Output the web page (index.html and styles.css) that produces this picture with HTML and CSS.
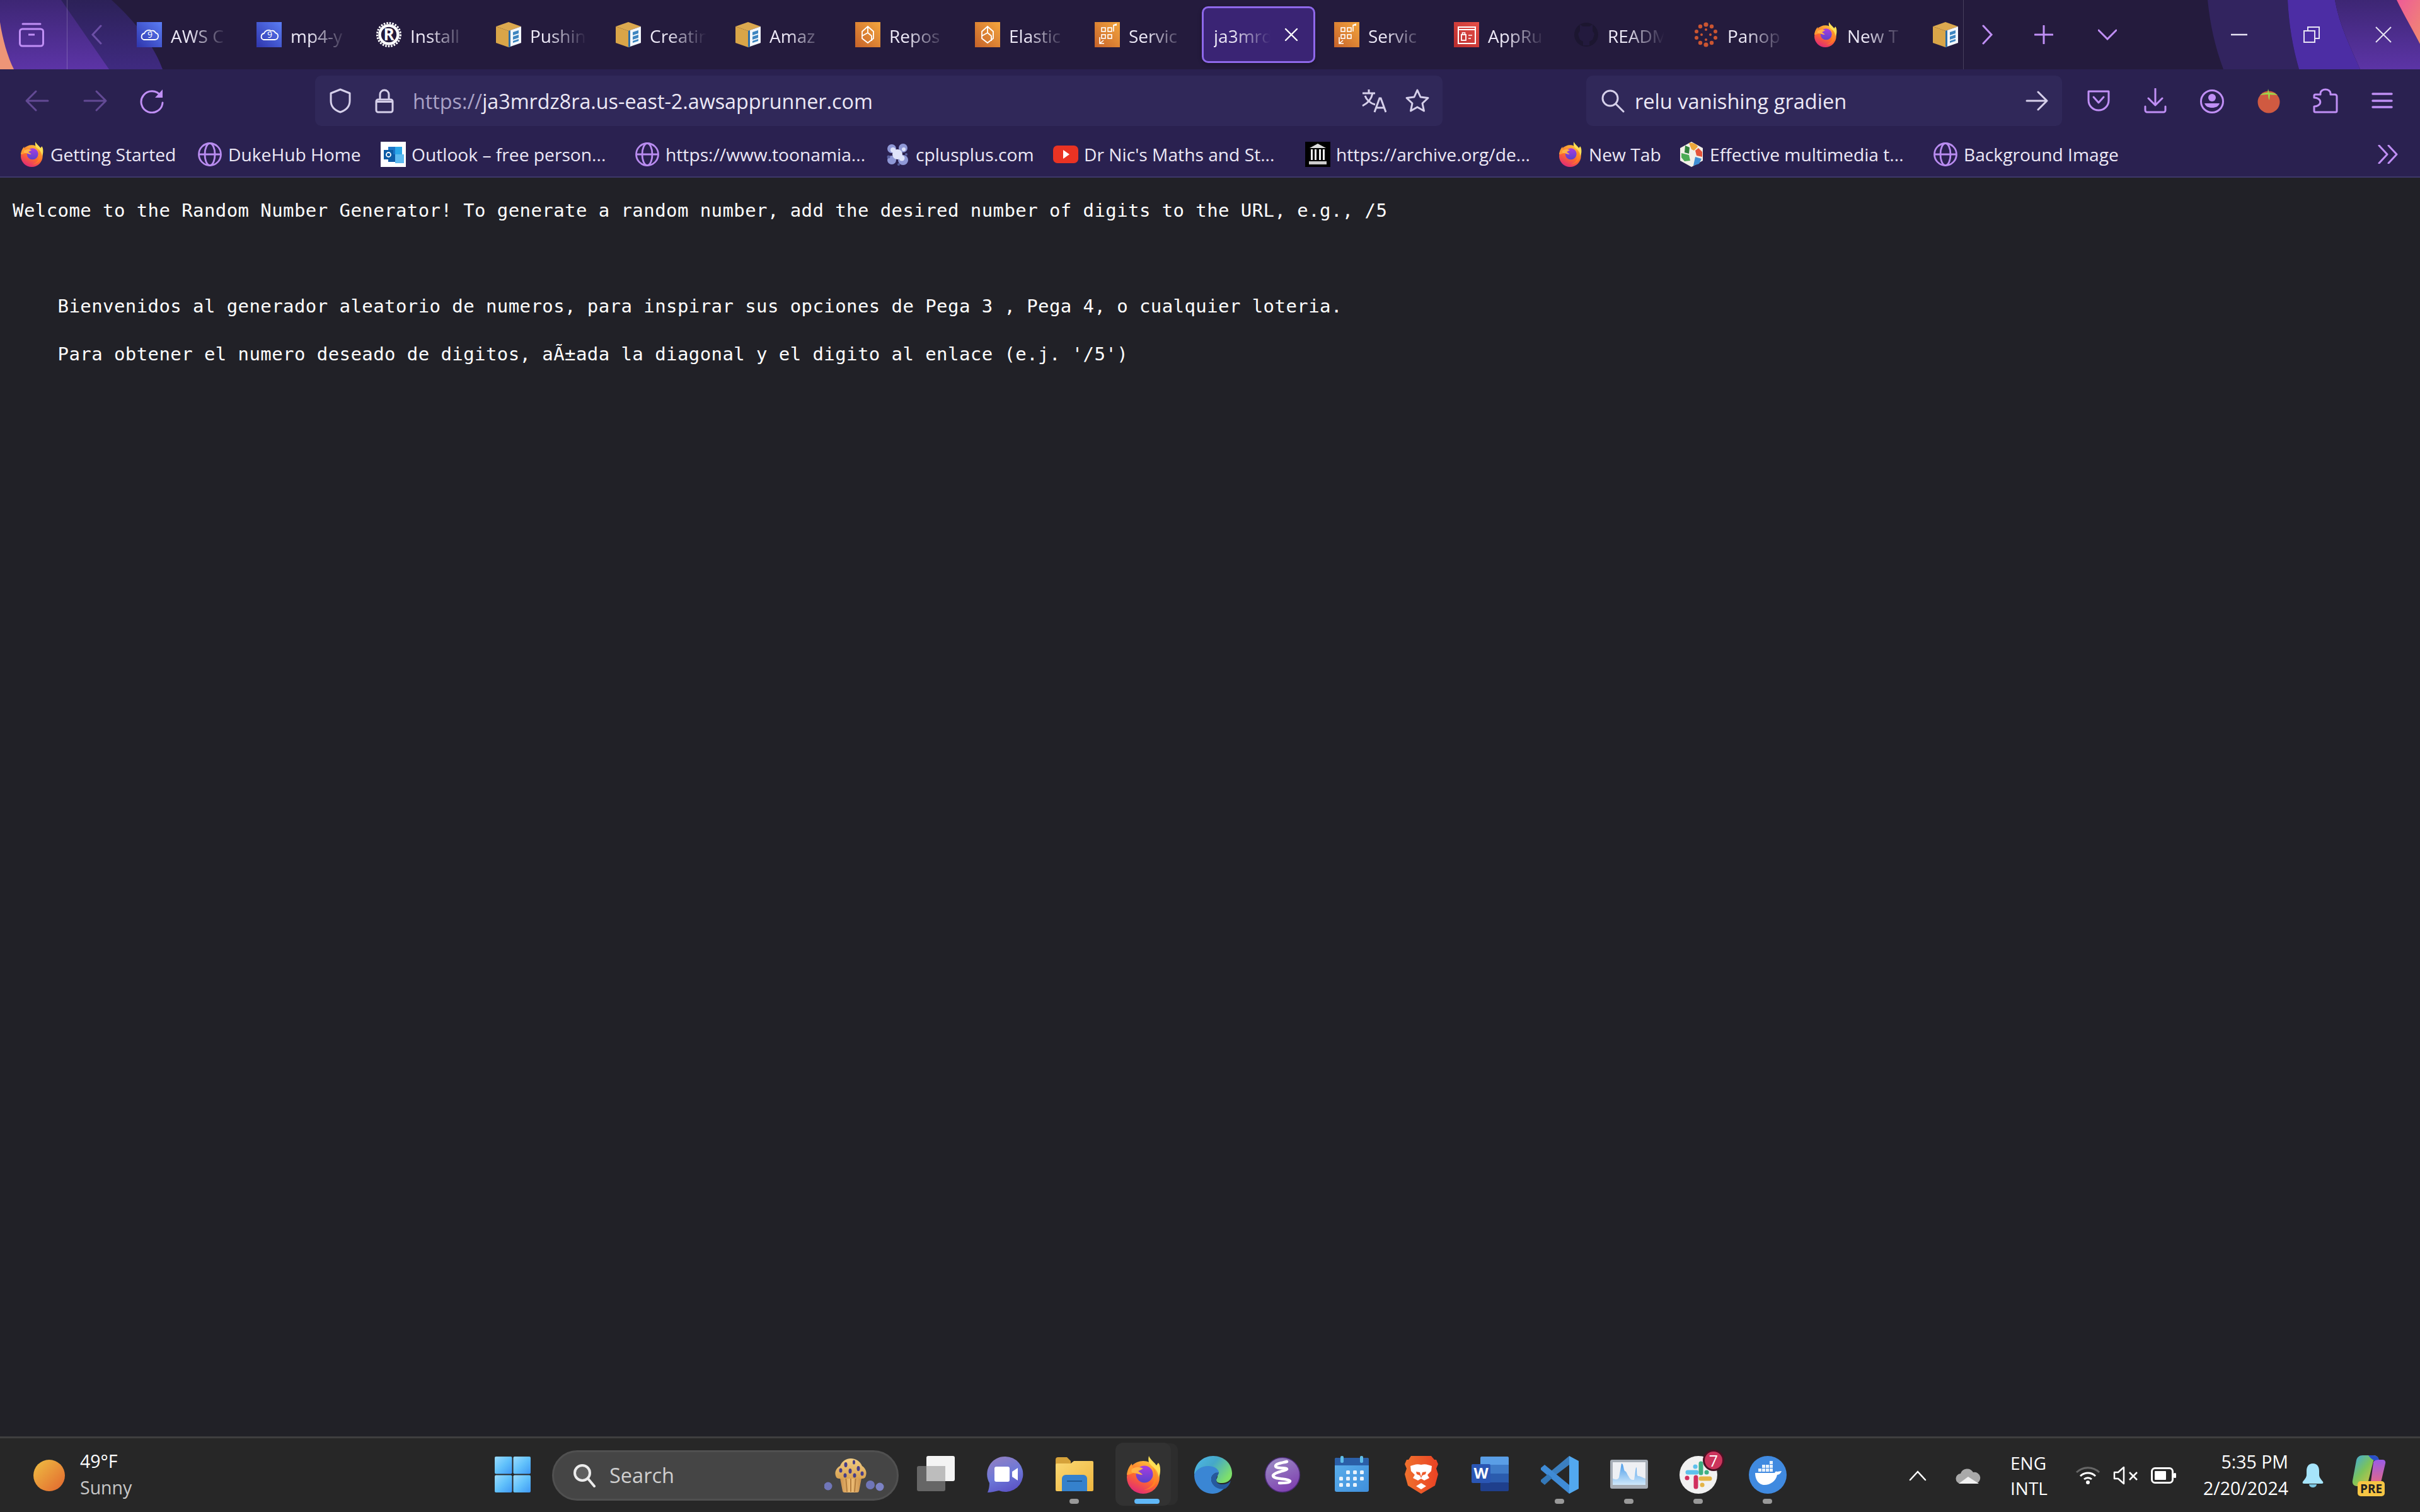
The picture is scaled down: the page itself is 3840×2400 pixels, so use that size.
FILE: index.html
```html
<!DOCTYPE html>
<html lang="en">
<head>
<meta charset="utf-8">
<title>ja3mrdz8ra.us-east-2.awsapprunner.com</title>
<link rel="stylesheet" href="styles.css">
</head>
<body>
<svg class="defs" aria-hidden="true">
  <defs>
    <linearGradient id="gBlue" x1="1" y1="0" x2="0" y2="1"><stop offset="0" stop-color="#5a7df5"/><stop offset="1" stop-color="#2f35ac"/></linearGradient>
    <linearGradient id="gOrange" x1="1" y1="0" x2="0" y2="1"><stop offset="0" stop-color="#f4a63e"/><stop offset="1" stop-color="#c6622a"/></linearGradient>
    <linearGradient id="gRed" x1="1" y1="0" x2="0" y2="1"><stop offset="0" stop-color="#e75048"/><stop offset="1" stop-color="#b92d2e"/></linearGradient>
    <linearGradient id="gFox" x1="0.8" y1="0" x2="0.3" y2="1"><stop offset="0" stop-color="#ffc93c"/><stop offset=".55" stop-color="#ff6a2c"/><stop offset="1" stop-color="#e0287a"/></linearGradient>
    <linearGradient id="gFoxIn" x1="0.5" y1="0" x2="0.5" y2="1"><stop offset="0" stop-color="#a93ce0"/><stop offset="1" stop-color="#5a43cc"/></linearGradient>
    <linearGradient id="gEdge" x1="0" y1="0" x2="1" y2="0.6"><stop offset="0" stop-color="#4fb8ea"/><stop offset=".5" stop-color="#45a8c8"/><stop offset="1" stop-color="#7ee06a"/></linearGradient>
    <linearGradient id="gChat" x1="0.3" y1="0" x2="0.7" y2="1"><stop offset="0" stop-color="#8f7fc4"/><stop offset=".5" stop-color="#6d78d8"/><stop offset="1" stop-color="#5a50c4"/></linearGradient>
    <linearGradient id="gFolder" x1="0" y1="0" x2="1" y2="1"><stop offset="0" stop-color="#fbd873"/><stop offset="1" stop-color="#eeb63f"/></linearGradient>
    <linearGradient id="gEmacs" x1="0.2" y1="0" x2="0.7" y2="1"><stop offset="0" stop-color="#9a8cc4"/><stop offset="1" stop-color="#7f3fb0"/></linearGradient>
    <linearGradient id="gBrave" x1="0" y1="0.5" x2="1" y2="0.5"><stop offset="0" stop-color="#f0722e"/><stop offset="1" stop-color="#ea4224"/></linearGradient>
    <linearGradient id="gCal" x1="0" y1="0" x2="1" y2="1"><stop offset="0" stop-color="#5cb0ec"/><stop offset="1" stop-color="#3f8fdc"/></linearGradient>
    <linearGradient id="gWin" x1="0" y1="0" x2="1" y2="1"><stop offset="0" stop-color="#9bdcff"/><stop offset=".5" stop-color="#62c2fb"/><stop offset="1" stop-color="#3f98f4"/></linearGradient>
    <linearGradient id="gMon" x1="0" y1="0" x2="0" y2="1"><stop offset="0" stop-color="#4a9be8"/><stop offset="1" stop-color="#cfe8fb"/></linearGradient>
    <linearGradient id="gSun" x1="0" y1="0" x2="1" y2="1"><stop offset="0" stop-color="#efc043"/><stop offset="1" stop-color="#e2652e"/></linearGradient>
    <linearGradient id="gCop" x1="0" y1="0" x2="1" y2="1"><stop offset="0" stop-color="#3aa7e8"/><stop offset=".45" stop-color="#7cc35a"/><stop offset="1" stop-color="#f5c43c"/></linearGradient>
    <linearGradient id="gCop2" x1="0" y1="0" x2="0" y2="1"><stop offset="0" stop-color="#9a5ce8"/><stop offset="1" stop-color="#ee6a7a"/></linearGradient>
    <linearGradient id="gMuf" x1="0" y1="0" x2="0" y2="1"><stop offset="0" stop-color="#f2cd83"/><stop offset="1" stop-color="#d9a352"/></linearGradient>
    <linearGradient id="gPaper" x1="0" y1="0" x2="1" y2="0"><stop offset="0" stop-color="#c98f4a"/><stop offset=".5" stop-color="#f0c078"/><stop offset="1" stop-color="#c98f4a"/></linearGradient>

    <symbol id="i-c9" viewBox="0 0 40 40">
      <rect width="40" height="40" fill="url(#gBlue)"/>
      <path d="M11 28h18a5.500 5.500 0 0 0 1-10.800 6 6 0 0 0-7-3.200 7.500 7.500 0 0 0-11 4 5.200 5.200 0 0 0-1 10z" fill="none" stroke="#fff" stroke-width="1.800"/>
      <text x="21" y="25" class="svg-nine">9</text>
    </symbol>
    <symbol id="i-rust" viewBox="0 0 40 40">
      <circle cx="20" cy="20" r="18.500" fill="none" stroke="#fff" stroke-width="3" stroke-dasharray="2.600 2"/>
      <circle cx="20" cy="20" r="14.500" fill="none" stroke="#fff" stroke-width="4.500"/>
      <text x="20" y="29" class="svg-r">R</text>
    </symbol>
    <symbol id="i-box" viewBox="0 0 40 40">
      <polygon points="20,0 40,7 20,14 0,7" fill="#dca94f"/>
      <polygon points="0,7 20,14 20,40 0,33" fill="#d9a548"/>
      <polygon points="20,14 40,7 40,33 20,40" fill="#f3f7fb"/>
      <polygon points="20,14 23,13 23,39 20,40" fill="#2c6fa8"/>
      <path d="M27 16l9-3v5l-9 3zM27 23l9-3v5l-9 3zM27 30l9-3v3l-9 3z" fill="#3e86c0"/>
    </symbol>
    <symbol id="i-repo" viewBox="0 0 40 40">
      <rect width="40" height="40" fill="url(#gOrange)"/>
      <path d="M20 7l9 8v11l-9 7-9-7V15z M20 7v10l-9 5 M20 17l6 5v8" fill="none" stroke="#fff" stroke-width="1.800"/>
    </symbol>
    <symbol id="i-svc" viewBox="0 0 40 40">
      <rect width="40" height="40" fill="url(#gOrange)"/>
      <g fill="none" stroke="#fff" stroke-width="1.600">
        <rect x="11" y="9" width="6" height="6"/><rect x="21" y="9" width="6" height="6"/>
        <rect x="11" y="20" width="6" height="6"/><rect x="21" y="20" width="6" height="6"/>
        <path d="M30 15V5h5M30 5l5-2M8 24v10h7M8 34l6-5"/>
      </g>
    </symbol>
    <symbol id="i-apprun" viewBox="0 0 40 40">
      <rect width="40" height="40" fill="url(#gRed)"/>
      <rect x="7" y="8" width="27" height="26" fill="none" stroke="#fff" stroke-width="2"/>
      <path d="M7 12h27" stroke="#fff" stroke-width="2"/>
      <rect x="12" y="20" width="7" height="9" fill="none" stroke="#fff" stroke-width="1.800"/>
      <path d="M13.500 20v-3h4v3M23 21h6M23 26h4" fill="none" stroke="#fff" stroke-width="1.600"/>
    </symbol>
    <symbol id="i-gh" viewBox="0 0 40 40">
      <ellipse cx="20" cy="20" rx="19" ry="19" fill="#1c1630"/>
      <path d="M10 4l5 3h10l5-3v10l3 5-3 9-5 3v6H15v-6l-5-3-3-9 3-5z" fill="#231a3e"/>
    </symbol>
    <symbol id="i-pan" viewBox="0 0 40 40">
      <g fill="#cb5531">
        <circle cx="20" cy="4" r="3.600"/><circle cx="29" cy="7" r="3.200"/><circle cx="35" cy="15" r="3"/><circle cx="35" cy="25" r="3"/><circle cx="29" cy="33" r="3.200"/><circle cx="20" cy="36" r="3.600"/><circle cx="11" cy="33" r="3.200"/><circle cx="5" cy="25" r="3"/><circle cx="5" cy="15" r="3"/><circle cx="11" cy="7" r="3.200"/>
        <circle cx="20" cy="12" r="2"/><circle cx="27" cy="20" r="2"/><circle cx="20" cy="28" r="2"/><circle cx="13" cy="20" r="2"/>
      </g>
    </symbol>
    <symbol id="i-fox" viewBox="0 0 60 60">
      <circle cx="29" cy="34" r="26" fill="url(#gFox)"/>
      <path d="M38 0c-2 8 0 12 6 17 5 4 8 7 10 17 3-7 3-19-1-23-2 2-2 3-3 4C47 10 41 7 38 0z" fill="#ffdf55"/>
      <path d="M3 30c1-10 6-16 8-18 0 6 3 9 8 9-2 3-5 6-8 7-3 1-5 2-8 2z" fill="#ff9a32"/>
      <circle cx="31" cy="29" r="13.500" fill="url(#gFoxIn)"/>
      <path d="M11 21c6-4 11-4 18-1-3 1-4 3-8 4 2 2 5 3 7 6-6 0-9-3-15-3-3 0-3-4-2-6z" fill="#ffb347"/>
      <path d="M44 18c6 6 9 16 4 26-3 6-10 10-18 10 11-3 17-10 17-20 0-6-1-11-3-16z" fill="#ff8a1f" opacity=".7"/>
    </symbol>
    <symbol id="i-globe" viewBox="0 0 40 40">
      <g fill="none" stroke="#b98cf0" stroke-width="2.800">
        <circle cx="20" cy="20" r="17.500"/><ellipse cx="20" cy="20" rx="8" ry="17.500"/><path d="M3 20h34"/>
      </g>
    </symbol>
    <symbol id="i-outlook" viewBox="0 0 40 40">
      <rect width="40" height="40" fill="#fff"/>
      <rect x="12" y="8" width="22" height="24" fill="#1b75c8"/>
      <rect x="23" y="8" width="11" height="12" fill="#2aa6e8"/>
      <rect x="12" y="20" width="11" height="12" fill="#0f5ca8"/>
      <rect x="23" y="20" width="14" height="14" fill="#5ebbf0"/>
      <rect x="5" y="13" width="15" height="15" fill="#0d5ca5"/>
      <circle cx="12.500" cy="20.500" r="3.500" fill="none" stroke="#fff" stroke-width="1.800"/>
    </symbol>
    <symbol id="i-cpp" viewBox="0 0 40 40">
      <g fill="#8f98d6"><circle cx="11" cy="11" r="7"/><circle cx="29" cy="10" r="7"/><circle cx="11" cy="29" r="7"/><circle cx="29" cy="29" r="8"/></g>
      <g fill="#dfe3fa"><circle cx="20" cy="20" r="8"/><circle cx="13" cy="13" r="4"/><circle cx="27" cy="26" r="4.500"/><circle cx="30" cy="12" r="3"/></g>
      <g fill="#59609e"><circle cx="6" cy="24" r="2.500"/><circle cx="22" cy="36" r="2"/><circle cx="34" cy="20" r="2"/></g>
    </symbol>
    <symbol id="i-yt" viewBox="0 0 40 40">
      <rect y="6" width="40" height="28" rx="7" fill="#ea3323"/>
      <polygon points="16,13 26,20 16,27" fill="#fff"/>
    </symbol>
    <symbol id="i-arch" viewBox="0 0 40 40">
      <rect width="40" height="40" fill="#000"/>
      <polygon points="20,3 33,10 7,10" fill="#ddd"/>
      <rect x="6" y="31" width="28" height="5" fill="#ccc"/>
      <g fill="#eee"><rect x="9" y="12" width="3" height="17"/><rect x="15" y="12" width="3" height="17"/><rect x="22" y="12" width="3" height="17"/><rect x="28" y="12" width="3" height="17"/></g>
    </symbol>
    <symbol id="i-eff" viewBox="0 0 40 40">
      <polygon points="20,0 38,10 38,30 20,40 2,30 2,10" fill="#f2f0e8"/>
      <path d="M16 2c6-1 12 1 14 6l-6 6-4-2z" fill="#eea83a"/>
      <path d="M31 10l6 6v8l-9-2-2-8z" fill="#e4543a"/>
      <path d="M26 24l10 3-4 8-9 3z" fill="#3f8ed4"/>
      <path d="M18 26l5 2-2 10-8-3z" fill="#f2f0e8"/>
      <path d="M4 18l12 3 2 9-9 1-5-6z" fill="#4bab54"/>
      <path d="M10 6l7 3-1 10-7-2z" fill="#2f7f3a"/>
    </symbol>
  </defs>
</svg>

<div class="page">
  <header class="chrome">
    <div class="tabstrip">
      <svg class="theme" viewBox="0 0 3840 110" preserveAspectRatio="none" aria-hidden="true">
        <defs>
          <linearGradient id="tA" x1="0" y1="0" x2="0" y2="1"><stop offset="0" stop-color="#3d2674"/><stop offset="1" stop-color="#5c34a6"/></linearGradient>
          <linearGradient id="tB" x1="0" y1="0" x2="0" y2="1"><stop offset="0" stop-color="#2c2158"/><stop offset="1" stop-color="#3f2a80"/></linearGradient>
          <linearGradient id="tP" x1="0" y1="0" x2="1" y2="1"><stop offset="0" stop-color="#ee5a98"/><stop offset="1" stop-color="#f08a70"/></linearGradient>
        </defs>
        <path d="M0 0H177C215 35 243 70 258 110H0z" fill="url(#tB)"/>
        <path d="M0 0H97L173 110H0z" fill="url(#tA)"/>
        <path d="M0 35C4 62 12 90 22 110H0z" fill="#ee9577"/>
        <path d="M3503 0H3630C3632 40 3638 75 3648 110H3528C3515 75 3507 40 3503 0z" fill="#32245f"/>
        <path d="M3630 0H3705C3712 40 3730 75 3745 110H3648C3638 75 3632 40 3630 0z" fill="#4c2da4"/>
        <path d="M3705 0H3803C3815 25 3830 50 3840 70V110H3745C3730 75 3712 40 3705 0z" fill="url(#tA)"/>
        <path d="M3803 0H3840V70C3830 50 3815 25 3803 0z" fill="url(#tP)"/>
      </svg>
      <div class="pinned">
        <svg class="ico-40" viewBox="0 0 40 40"><g fill="none" stroke="#c08ff5" stroke-width="3" stroke-linecap="round" stroke-linejoin="round"><path d="M6 3h28"/><rect x="1.500" y="11" width="37" height="27" rx="4"/></g><path d="M15 20h10" stroke="#c08ff5" stroke-width="3"/></svg>
      </div>
      <div class="scroll-prev">
        <svg class="ico-chev" viewBox="0 0 18 32"><path d="M16 2L3 16l13 14" fill="none" stroke="#6c4fa6" stroke-width="3" stroke-linecap="round"/></svg>
      </div>
      <div class="tabs">
        <div class="tab"><svg class="fav"><use href="#i-c9"/></svg><span class="tab-label">AWS C</span></div>
        <div class="tab"><svg class="fav"><use href="#i-c9"/></svg><span class="tab-label">mp4-y</span></div>
        <div class="tab"><svg class="fav"><use href="#i-rust"/></svg><span class="tab-label">Install</span></div>
        <div class="tab"><svg class="fav"><use href="#i-box"/></svg><span class="tab-label">Pushin</span></div>
        <div class="tab"><svg class="fav"><use href="#i-box"/></svg><span class="tab-label">Creatin</span></div>
        <div class="tab"><svg class="fav"><use href="#i-box"/></svg><span class="tab-label">Amaz</span></div>
        <div class="tab"><svg class="fav"><use href="#i-repo"/></svg><span class="tab-label">Repos</span></div>
        <div class="tab"><svg class="fav"><use href="#i-repo"/></svg><span class="tab-label">Elastic</span></div>
        <div class="tab"><svg class="fav"><use href="#i-svc"/></svg><span class="tab-label">Servic</span></div>
        <div class="tab tab-active"><span class="tab-label tab-label-active">ja3mrdz</span><svg class="tab-close" viewBox="0 0 22 22"><path d="M2 2l18 18M20 2L2 20" stroke="#fff" stroke-width="2.400" stroke-linecap="round"/></svg></div>
        <div class="tab"><svg class="fav"><use href="#i-svc"/></svg><span class="tab-label">Servic</span></div>
        <div class="tab"><svg class="fav"><use href="#i-apprun"/></svg><span class="tab-label">AppRu</span></div>
        <div class="tab"><svg class="fav"><use href="#i-gh"/></svg><span class="tab-label">READM</span></div>
        <div class="tab"><svg class="fav"><use href="#i-pan"/></svg><span class="tab-label">Panop</span></div>
        <div class="tab"><svg class="fav"><use href="#i-fox"/></svg><span class="tab-label">New T</span></div>
        <div class="tab"><svg class="fav"><use href="#i-box"/></svg></div>
      </div>
      <div class="scroll-next">
        <svg class="ico-chev" viewBox="0 0 18 32"><path d="M2 2l13 14L2 30" fill="none" stroke="#c08ff5" stroke-width="3" stroke-linecap="round"/></svg>
      </div>
      <svg class="ico-plus" viewBox="0 0 30 30"><path d="M15 1v28M1 15h28" stroke="#c08ff5" stroke-width="3" stroke-linecap="round"/></svg>
      <svg class="ico-down" viewBox="0 0 30 18"><path d="M1 2l14 14L29 2" fill="none" stroke="#c08ff5" stroke-width="3" stroke-linecap="round"/></svg>
      <div class="winctl">
        <svg class="win-min" viewBox="0 0 26 4"><path d="M0 2h26" stroke="#e8e4f4" stroke-width="2.500"/></svg>
        <svg class="win-res" viewBox="0 0 26 26"><path d="M7 6V1h18v18h-6" fill="none" stroke="#e8e4f4" stroke-width="2"/><rect x="1" y="7" width="17" height="18" fill="none" stroke="#e8e4f4" stroke-width="2"/></svg>
        <svg class="win-cls" viewBox="0 0 26 26"><path d="M1 1l24 24M25 1L1 25" stroke="#e8e4f4" stroke-width="2"/></svg>
      </div>
    </div>

    <div class="navbar">
      <svg class="nav-btn" viewBox="0 0 90 40"><path d="M61 20H29M42 5L27 20l15 15" fill="none" stroke="#634a95" stroke-width="3" stroke-linecap="round" stroke-linejoin="round"/></svg>
      <svg class="nav-btn" viewBox="0 0 90 40"><path d="M29 20h32M48 5l15 15-15 15" fill="none" stroke="#634a95" stroke-width="3" stroke-linecap="round" stroke-linejoin="round"/></svg>
      <svg class="nav-btn" viewBox="0 0 90 40"><path d="M60 12a17 17 0 1 0 3 11" fill="none" stroke="#c08ff5" stroke-width="3" stroke-linecap="round"/><path d="M63 2v13H51z" fill="#c08ff5"/></svg>
      <div class="urlbar">
        <svg class="ico-shield" viewBox="0 0 36 40"><path d="M18 2l15 6v12c0 9-6 15-15 18C9 35 3 29 3 20V8z" fill="none" stroke="#d6d0ea" stroke-width="3" stroke-linejoin="round"/></svg>
        <svg class="ico-lock" viewBox="0 0 30 40"><path d="M8 18V10a7 7 0 0 1 14 0v8" fill="none" stroke="#d6d0ea" stroke-width="3"/><rect x="2" y="18" width="26" height="20" rx="3" fill="none" stroke="#d6d0ea" stroke-width="3"/><path d="M3 20h24v3H3z" fill="#d6d0ea"/></svg>
        <div class="url-text"><span class="url-dim">https://</span>ja3mrdz8ra.us-east-2.awsapprunner.com</div>
        <svg class="ico-tr" viewBox="0 0 40 40"><g fill="none" stroke="#d6d0ea" stroke-width="3"><path d="M2 8h20M12 2v6M18 8C16 18 10 24 2 28M6 12c2 6 8 12 16 14"/><path d="M21 38l8-22h2l8 22M24 31h12"/></g></svg>
        <svg class="ico-star" viewBox="0 0 40 40"><path d="M20 3l5 11 12 1.500-9 8.500 2.500 12L20 30l-10.500 6L12 24l-9-8.500L15 14z" fill="none" stroke="#d6d0ea" stroke-width="3" stroke-linejoin="round"/></svg>
      </div>
      <div class="searchbar">
        <svg class="ico-search" viewBox="0 0 38 38"><circle cx="15" cy="15" r="12" fill="none" stroke="#d6d0ea" stroke-width="3"/><path d="M24 24l12 12" stroke="#d6d0ea" stroke-width="3" stroke-linecap="round"/></svg>
        <div class="search-text">relu vanishing gradien</div>
        <svg class="ico-go" viewBox="0 0 36 32"><path d="M2 16h31M20 2l14 14-14 14" fill="none" stroke="#d6d0ea" stroke-width="3" stroke-linecap="round" stroke-linejoin="round"/></svg>
      </div>
      <div class="tools">
        <svg class="tool" viewBox="0 0 40 40"><path d="M4 5h32v14c0 9-7 16-16 16S4 28 4 19z" fill="none" stroke="#c08ff5" stroke-width="3" stroke-linejoin="round"/><path d="M12 14l8 9 8-9" fill="none" stroke="#c08ff5" stroke-width="3" stroke-linecap="round" stroke-linejoin="round"/></svg>
        <svg class="tool" viewBox="0 0 40 40"><path d="M20 1v25M9 16l11 11 11-11" fill="none" stroke="#c08ff5" stroke-width="3" stroke-linecap="round" stroke-linejoin="round"/><path d="M4 29v6a3 3 0 0 0 3 3h26a3 3 0 0 0 3-3v-6" fill="none" stroke="#c08ff5" stroke-width="3" stroke-linecap="round"/></svg>
        <svg class="tool" viewBox="0 0 40 40"><circle cx="20" cy="21" r="17.500" fill="none" stroke="#c08ff5" stroke-width="3"/><circle cx="20" cy="15" r="6" fill="#c08ff5"/><path d="M8 24h24c-2 5-6 7-12 7S10 29 8 24z" fill="#c08ff5"/></svg>
        <svg class="tool" viewBox="0 0 40 40"><circle cx="20" cy="22" r="17.500" fill="#d05a41"/><path d="M6 11c5-4 10-4 14-4 4 0 10 0 14 4-5-1-9 0-12-1l-1 9c-2-3-2-6-2-9-4 0-8 0-13 1z" fill="#9cd64a"/><path d="M19 1l2 7h-3z" fill="#9cd64a"/></svg>
        <svg class="tool" viewBox="0 0 40 40"><path d="M4 38a2 2 0 0 1-2-2v-7a7 5 0 0 0 0-14V12a2 2 0 0 1 2-2h8V8a8 6 0 0 1 16 0v2h7a3 3 0 0 1 3 3v23a2 2 0 0 1-2 2z" fill="none" stroke="#c08ff5" stroke-width="3" stroke-linejoin="round"/></svg>
        <svg class="tool" viewBox="0 0 40 40"><path d="M5 9h30M5 20h30M5 30h30" stroke="#c08ff5" stroke-width="3.500" stroke-linecap="round"/></svg>
      </div>
    </div>

    <div class="bookmarks">
      <div class="bm"><svg class="fav"><use href="#i-fox"/></svg><span>Getting Started</span></div>
      <div class="bm"><svg class="fav"><use href="#i-globe"/></svg><span>DukeHub Home</span></div>
      <div class="bm"><svg class="fav"><use href="#i-outlook"/></svg><span>Outlook – free person...</span></div>
      <div class="bm"><svg class="fav"><use href="#i-globe"/></svg><span>https://www.toonamia...</span></div>
      <div class="bm"><svg class="fav"><use href="#i-cpp"/></svg><span>cplusplus.com</span></div>
      <div class="bm"><svg class="fav"><use href="#i-yt"/></svg><span>Dr Nic's Maths and St...</span></div>
      <div class="bm"><svg class="fav"><use href="#i-arch"/></svg><span>https://archive.org/de...</span></div>
      <div class="bm"><svg class="fav"><use href="#i-fox"/></svg><span>New Tab</span></div>
      <div class="bm"><svg class="fav"><use href="#i-eff"/></svg><span>Effective multimedia t...</span></div>
      <div class="bm"><svg class="fav"><use href="#i-globe"/></svg><span>Background Image</span></div>
      <svg class="ico-more" viewBox="0 0 32 30"><path d="M2 1l13 14L2 29M17 1l13 14-13 14" fill="none" stroke="#c08ff5" stroke-width="3" stroke-linecap="round" stroke-linejoin="round"/></svg>
    </div>
  </header>

  <main class="content"><pre class="msg">Welcome to the Random Number Generator! To generate a random number, add the desired number of digits to the URL, e.g., /5

    Bienvenidos al generador aleatorio de numeros, para inspirar sus opciones de Pega 3 , Pega 4, o cualquier loteria.
    Para obtener el numero deseado de digitos, aÃ±ada la diagonal y el digito al enlace (e.j. '/5')</pre></main>

  <footer class="taskbar">
    <div class="weather">
      <svg class="sun" viewBox="0 0 50 50"><circle cx="25" cy="25" r="25" fill="url(#gSun)"/></svg>
      <div class="weather-text"><div class="w-temp">49°F</div><div class="w-desc">Sunny</div></div>
    </div>
    <div class="tb-start">
      <svg class="ico-win" viewBox="0 0 57 57"><g fill="url(#gWin)"><rect width="27.500" height="27.500" rx="2"/><rect x="29.500" width="27.500" height="27.500" rx="2"/><rect y="29.500" width="27.500" height="27.500" rx="2"/><rect x="29.500" y="29.500" width="27.500" height="27.500" rx="2"/></g></svg>
    </div>
    <div class="tb-search">
      <svg class="ico-tsearch" viewBox="0 0 36 38"><circle cx="15" cy="15" r="12" fill="#5e5e5e" stroke="#ececec" stroke-width="4"/><path d="M24 24l10 12" stroke="#ececec" stroke-width="4" stroke-linecap="round"/></svg>
      <span class="tb-search-label">Search</span>
      <svg class="ico-muffin" viewBox="0 0 96 54">
        <circle cx="6" cy="44" r="6.500" fill="#7076b8"/><circle cx="73" cy="42" r="7" fill="#6f75b8"/><circle cx="88" cy="45" r="6.500" fill="#7c82c4"/>
        <path d="M24 26h36l-5 26a3 3 0 0 1-3 2H32a3 3 0 0 1-3-2z" fill="url(#gPaper)"/>
        <path d="M34 28l2 25M42 28v25M50 28l-2 25" stroke="#b37d3e" stroke-width="2"/>
        <path d="M19 30c-4-8 0-15 6-18 3-8 10-12 17-12s15 4 18 12c5 3 9 10 5 18-2 3-8 2-12 2H31c-4 0-10 1-12-2z" fill="url(#gMuf)"/>
        <g fill="#463d8a"><ellipse cx="34" cy="10" rx="2.500" ry="4"/><ellipse cx="47" cy="6" rx="2" ry="3.500"/><ellipse cx="26" cy="19" rx="2.500" ry="3.500"/><ellipse cx="41" cy="20" rx="2.500" ry="4"/><ellipse cx="54" cy="16" rx="2.500" ry="4"/><ellipse cx="60" cy="24" rx="2.500" ry="3.500"/><ellipse cx="33" cy="27" rx="2.500" ry="3.500"/><ellipse cx="48" cy="27" rx="2.500" ry="3.500"/></g>
      </svg>
    </div>
    <div class="tasks">
      <div class="task"><svg class="t-ico" viewBox="0 0 60 60"><rect x="0" y="16" width="45" height="40" rx="3" fill="#666"/><rect x="15" y="0" width="45" height="40" rx="3" fill="#f4f4f4"/><rect x="15" y="16" width="30" height="24" fill="#bdbdbd"/></svg></div>
      <div class="task"><svg class="t-ico" viewBox="0 0 60 60"><path d="M30 1a28 28 0 1 1-10 54c-6 1-12 3-18 3 2-5 3-9 3-15A28 28 0 0 1 30 1z" fill="url(#gChat)"/><rect x="13" y="17" width="24" height="24" rx="3" fill="#fff"/><path d="M41 25l9-6v20l-9-6z" fill="#fff"/></svg></div>
      <div class="task is-open"><svg class="t-ico" viewBox="0 0 60 60"><path d="M0 6a4 4 0 0 1 4-4h14l6 6v12H0z" fill="#d6a23a"/><path d="M0 14a2 2 0 0 1 2-2h22l5-4h29a2 2 0 0 1 2 2v44a2 2 0 0 1-2 2H2a2 2 0 0 1-2-2z" fill="url(#gFolder)"/><path d="M10 56V36a6 6 0 0 1 6-6h28a6 6 0 0 1 6 6v20z" fill="#3581cc"/><path d="M18 40h24" stroke="#1f5a96" stroke-width="2"/></svg></div>
      <div class="task is-active"><svg class="t-ico"><use href="#i-fox"/></svg></div>
      <div class="task"><svg class="t-ico" viewBox="0 0 60 60"><path d="M0 30C0 12 14 0 30 0c17 0 30 12 30 28 0 9-7 15-16 15-7 0-9-2-9-5 0-2 2-3 2-6 0-6-6-12-15-12C12 20 2 24 0 30z" fill="url(#gEdge)"/><path d="M0 30c2-8 12-14 22-14 9 0 16 4 17 10-6 0-12 4-12 11 0 8 8 16 22 13-5 6-12 10-20 10C12 60 0 46 0 30z" fill="#3a86d4"/><path d="M27 37c0-7 6-11 12-11 0 4-4 6-4 12 0 5 4 7 9 7 6 0 11-2 14-6-2 8-6 11-9 13-14 3-22-7-22-15z" fill="#26599e"/></svg></div>
      <div class="task"><svg class="t-ico" viewBox="0 0 60 60"><circle cx="30" cy="30" r="27.500" fill="url(#gEmacs)" stroke="#4c2a78" stroke-width="1.500"/><path d="M37 9c-7 2-18 3-18 7 0 5 18 2 18 5-2 3-19 4-22 10 0 7 24 4 27 9 0 3-12 3-17 3" fill="none" stroke="#fff" stroke-width="4.500" stroke-linecap="round"/></svg></div>
      <div class="task"><svg class="t-ico" viewBox="0 0 60 60"><rect x="3" y="3" width="54" height="54" rx="3" fill="url(#gCal)"/><path d="M3 6a3 3 0 0 1 3-3h48a3 3 0 0 1 3 3v9H3z" fill="#2b5fa8"/><rect x="12" y="0" width="5" height="11" rx="2" fill="#5fbde8"/><rect x="43" y="0" width="5" height="11" rx="2" fill="#5fbde8"/><g fill="#e8f2fb"><rect x="21" y="23" width="6" height="6" rx="1.500"/><rect x="32" y="23" width="6" height="6" rx="1.500"/><rect x="43" y="23" width="6" height="6" rx="1.500"/><rect x="10" y="33" width="6" height="6" rx="1.500"/><rect x="21" y="33" width="6" height="6" rx="1.500"/><rect x="32" y="33" width="6" height="6" rx="1.500"/><rect x="43" y="33" width="6" height="6" rx="1.500"/><rect x="10" y="43" width="6" height="6" rx="1.500"/><rect x="21" y="43" width="6" height="6" rx="1.500"/><rect x="32" y="43" width="6" height="6" rx="1.500"/></g></svg></div>
      <div class="task"><svg class="t-ico" viewBox="0 0 60 60"><path d="M14 0h32l5 6h3l3 7-3 7 3 9-5 18-22 13-21-13-5-18 3-9-3-7 3-7h3z" fill="url(#gBrave)"/><path d="M13 16c6-2 10-4 17-2 7-2 11 0 17 2l-1 8-6 6 3 5-8 4-5-3-5 3-8-4 3-5-6-6z" fill="#fff"/><path d="M22 25l6 1 2 7 2-7 6-1-1 4-5 2-2 4-2-4-5-2z" fill="#ee5a2a"/><path d="M22 48l8-5 8 5-8 5z" fill="#fff"/></svg></div>
      <div class="task"><svg class="t-ico" viewBox="0 0 60 60"><rect x="14" y="1" width="45" height="19" rx="2" fill="#5a9ee6"/><rect x="14" y="14" width="45" height="15" fill="#3f7bc8"/><rect x="14" y="28" width="45" height="15" fill="#2b5cae"/><rect x="14" y="42" width="45" height="14" rx="2" fill="#1f3f8c"/><rect x="0" y="13" width="30" height="30" rx="2" fill="#2a56b4"/><text x="15" y="36" class="svg-w">W</text></svg></div>
      <div class="task is-open"><svg class="t-ico" viewBox="0 0 60 60"><path d="M45 0l15 8v44l-15 8V0z" fill="#52a8ef"/><path d="M45 0v14L16 36l-7-6z" fill="#3b7fc0"/><path d="M45 60V46L6 14 0 19a2 2 0 0 0 0 3z" fill="#3f8bd6"/><path d="M0 38a2 2 0 0 0 0 3l6 5 12-11-7-6z" fill="#3478b8"/></svg></div>
      <div class="task is-open"><svg class="t-ico" viewBox="0 0 60 48"><rect width="60" height="46" rx="3" fill="#a6adb6"/><rect x="4" y="4" width="52" height="36" fill="#eef0f4"/><path d="M4 30c6 2 8 2 10-2l4-22c3 0 3 8 5 12 3 0 4 6 6 8 3 6 5 6 9 6l3-20c2 0 0 12 3 14 4 0 6 2 12 4v10H4z" fill="url(#gMon)"/></svg></div>
      <div class="task is-open">
        <svg class="t-ico" viewBox="0 0 60 60"><circle cx="30" cy="30" r="30" fill="#f1f1f1"/><g fill="none" stroke-width="7" stroke-linecap="round"><path d="M13 26h14M25 17h.1" stroke="#5fc1ec"/><path d="M34 12v15M43 26h.1" stroke="#3fb082"/><path d="M34 36h14M36 46h.1" stroke="#e4b445"/><path d="M26 34v15M12 35h.1" stroke="#d12f5f"/></g></svg>
        <span class="badge">7</span>
      </div>
      <div class="task is-open"><svg class="t-ico" viewBox="0 0 60 60"><circle cx="30" cy="30" r="30" fill="#408ae0"/><path d="M10 27h31c1-3 3-3 4-2 2 0 4-1 7-1-1 3-4 6-7 6-2 10-11 16-20 16-9 0-15-8-15-19z" fill="#fff"/><g fill="#e8f1fb"><rect x="15" y="20" width="5" height="5"/><rect x="21" y="20" width="5" height="5"/><rect x="27" y="20" width="5" height="5"/><rect x="33" y="20" width="5" height="5"/><rect x="21" y="14" width="5" height="5"/><rect x="27" y="14" width="5" height="5"/><rect x="33" y="14" width="5" height="5"/><rect x="33" y="8" width="5" height="5"/></g></svg></div>
    </div>
    <div class="tray">
      <svg class="tr-chev" viewBox="0 0 28 18"><path d="M2 16L14 3l12 13" fill="none" stroke="#fff" stroke-width="2.500" stroke-linecap="round"/></svg>
      <svg class="tr-cloud" viewBox="0 0 40 26"><path d="M9 26A8 8 0 0 1 8 10 11 11 0 0 1 28 8a9 9 0 0 1 4 18z" fill="#a9a9a9"/><path d="M5 26l15-11 17 11z" fill="#f1f1f1"/></svg>
      <div class="tr-lang"><div>ENG</div><div>INTL</div></div>
      <svg class="tr-wifi" viewBox="0 0 40 30"><path d="M2 10a26 26 0 0 1 36 0" fill="none" stroke="#666" stroke-width="3"/><path d="M8 16a17 17 0 0 1 24 0M14 21a9 9 0 0 1 12 0" fill="none" stroke="#fff" stroke-width="3"/><circle cx="20" cy="26" r="3" fill="#fff"/></svg>
      <svg class="tr-vol" viewBox="0 0 40 30"><path d="M2 10h6l9-8v26l-9-8H2z" fill="none" stroke="#fff" stroke-width="2.500" stroke-linejoin="round"/><path d="M26 10l12 12M38 10L26 22" stroke="#fff" stroke-width="2.500"/></svg>
      <svg class="tr-bat" viewBox="0 0 40 26"><rect x="1.500" y="1.500" width="33" height="23" rx="5" fill="none" stroke="#fff" stroke-width="3"/><rect x="6" y="6" width="18" height="14" rx="1" fill="#fff"/><rect x="36" y="9" width="4" height="8" rx="1.500" fill="#fff"/></svg>
      <div class="tr-clock"><div>5:35 PM</div><div>2/20/2024</div></div>
      <svg class="tr-bell" viewBox="0 0 34 38"><path d="M17 0c7 0 10 5 10 12v6c0 4 3 7 6 11 1 2 0 3-2 3H3c-2 0-3-1-2-3 3-4 6-7 6-11v-6C7 5 10 0 17 0z" fill="#a6e4fb"/><path d="M11 33h12c0 3-3 5-6 5s-6-2-6-5z" fill="#7cc6e2"/></svg>
      <div class="copilot">
        <svg class="cop-ico" viewBox="0 0 58 54"><path d="M12 50C7 50 4 46 5 41L11 9c1-5 5-8 10-8h17c4 0 7 2 8 5-3-1-6 0-8 4l-8 32c-1 5-4 8-8 8z" fill="url(#gCop)"/><path d="M30 1h8c5 0 8 3 9 7l-4 4c-3-3-8-4-13-11z" fill="#2a4fc8"/><path d="M38 12c1-3 5-4 10-4h5c3 0 5 3 4 6l-7 30c-1 4-5 6-9 6H26c4 0 7-3 8-7z" fill="url(#gCop2)"/></svg>
        <span class="cop-pre">PRE</span>
      </div>
    </div>
  </footer>
</div>
</body>
</html>
```

FILE: styles.css
```css
* { box-sizing: border-box; }
html, body { margin: 0; padding: 0; }
body { width: 3840px; height: 2400px; overflow: hidden; background: #212127; font-family: "Open Sans", "Noto Sans", sans-serif; }
.defs { position: absolute; width: 0; height: 0; }
svg { display: block; flex: none; }
.svg-nine { font: 14px "Open Sans", sans-serif; fill: #fff; text-anchor: middle; }
.svg-r { font: bold 26px "Open Sans", sans-serif; fill: #fff; text-anchor: middle; }
.svg-w { font: bold 24px "Open Sans", sans-serif; fill: #fff; text-anchor: middle; }

.page { display: flex; flex-direction: column; height: 2400px; }
.chrome { flex: none; background: #2a2150; border-bottom: 2px solid #3e3869; }

/* tab strip */
.tabstrip { position: relative; display: flex; align-items: center; height: 110px; background: #241b3d; }
.theme { position: absolute; inset: 0; width: 100%; height: 100%; }
.pinned, .scroll-prev, .tabs, .scroll-next, .ico-plus, .ico-down, .winctl { position: relative; }
.pinned { display: flex; justify-content: center; align-items: center; width: 107px; height: 110px; padding-right: 7px; border-right: 1px solid rgba(255,255,255,.22); }
.ico-40 { width: 40px; height: 40px; }
.scroll-prev { display: flex; align-items: center; width: 90px; height: 110px; padding-left: 37px; }
.ico-chev { width: 18px; height: 32px; }
.tabs { display: flex; width: 2919px; height: 110px; align-items: center; gap: 10px; overflow: hidden; border-right: 1px solid rgba(255,255,255,.16); }
.tab { flex: none; display: flex; align-items: center; gap: 14px; width: 180px; height: 90px; padding-left: 20px; }
.fav { width: 40px; height: 40px; flex: none; }
.tab-label { width: 106px; padding-top: 3px; white-space: nowrap; font-size: 28px; color: #ece8f6; -webkit-mask-image: linear-gradient(to right, #000 30px, transparent 90px); mask-image: linear-gradient(to right, #000 30px, transparent 90px); }
.tab-active { padding-left: 16px; gap: 0; border: 3px solid #8e68ea; border-radius: 10px; background: #3a2474; box-shadow: 0 2px 6px rgba(0,0,0,.3); }
.tab-label-active { width: 108px; }
.tab-close { width: 22px; height: 22px; margin-left: 4px; flex: none; }
.scroll-next { display: flex; align-items: center; width: 112px; height: 110px; padding-left: 29px; }
.ico-plus { width: 30px; height: 30px; }
.ico-down { width: 30px; height: 18px; margin-left: 71px; }
.winctl { display: flex; align-items: center; margin-left: 181px; }
.win-min { width: 26px; height: 4px; }
.win-res { width: 26px; height: 26px; margin-left: 89px; }
.win-cls { width: 26px; height: 26px; margin-left: 88px; }

/* nav bar */
.navbar { display: flex; align-items: center; height: 100px; padding-left: 15px; }
.nav-btn { width: 90px; height: 40px; }
.urlbar { display: flex; align-items: center; width: 1789px; height: 80px; margin-left: 215px; padding: 0 20px 0 22px; background: #302859; border-radius: 10px; }
.ico-shield { width: 36px; height: 40px; }
.ico-lock { width: 30px; height: 40px; margin-left: 37px; }
.url-text { flex: 1; margin-left: 30px; font-size: 32.3px; color: #ece8f6; white-space: nowrap; }
.url-dim { color: #a9a2c6; }
.ico-tr { width: 40px; height: 40px; }
.ico-star { width: 40px; height: 40px; margin-left: 29px; }
.searchbar { display: flex; align-items: center; width: 755px; height: 80px; margin-left: 228px; padding: 0 22px 0 23px; background: #302859; border-radius: 10px; }
.ico-search { width: 38px; height: 38px; }
.search-text { flex: 1; margin-left: 16px; font-size: 32.6px; color: #ece8f6; white-space: nowrap; }
.ico-go { width: 36px; height: 32px; }
.tools { display: flex; margin-left: 38px; gap: 50px; }
.tool { width: 40px; height: 40px; }

/* bookmarks */
.bookmarks { display: grid; grid-template-columns: 282px 291px 403px 397px 267px 400px 401px 192px 403px 706px auto; align-items: center; height: 70px; padding-left: 31px; }
.bm { display: flex; align-items: center; gap: 9px; font-size: 28.2px; color: #ece8f6; white-space: nowrap; }
.ico-more { width: 32px; height: 30px; }

/* page content */
.content { flex: 1; min-height: 0; }
.msg { margin: 0; padding: 14px 20px 0; font-family: "DejaVu Sans Mono", "Liberation Mono", monospace; font-size: 29px; letter-spacing: .42px; line-height: 76px; color: #fff; }

/* taskbar */
.taskbar { flex: none; display: flex; align-items: center; height: 120px; background: #272727; border-top: 3px solid #3f3f3f; color: #fff; }
.weather { display: flex; align-items: center; gap: 24px; width: 758px; padding-left: 53px; }
.sun { width: 50px; height: 50px; }
.w-temp, .w-desc { font-size: 28.5px; line-height: 42px; }
.weather-text { margin-top: -3px; }
.w-desc { color: #c8c8c8; }
.tb-start { display: flex; justify-content: center; width: 110px; }
.ico-win { width: 57px; height: 57px; margin-top: -2px; }
.tb-search { display: flex; align-items: center; width: 550px; height: 80px; margin-left: 8px; padding: 0 19px 0 30px; background: #454545; border: 3px solid #505050; border-radius: 40px; }
.ico-tsearch { width: 36px; height: 38px; }
.tb-search-label { flex: 1; margin-left: 22px; font-size: 32.5px; color: #cfcfcf; }
.ico-muffin { width: 96px; height: 54px; }
.tasks { display: flex; margin-left: 4px; }
.task { position: relative; display: flex; justify-content: center; align-items: center; width: 110px; height: 117px; }
.t-ico { position: relative; width: 60px; height: 60px; margin-top: -2px; }
.is-open::after { content: ""; position: absolute; left: 47px; bottom: 13px; width: 15px; height: 8px; border-radius: 4px; background: #999; }
.is-active::before { content: ""; position: absolute; left: 10px; top: 7px; width: 88px; height: 100px; border-radius: 12px; background: #323232; box-shadow: 12px 0 0 -1px #2d2d2d; }
.is-active::after { content: ""; position: absolute; left: 40px; bottom: 13px; width: 40px; height: 8px; border-radius: 4px; background: #60b8f8; }
.badge { position: absolute; left: 62px; top: 18px; display: flex; justify-content: center; align-items: center; width: 34px; height: 34px; border-radius: 50%; background: #cc345c; border: 3px solid #4a1224; font-size: 25px; color: #fff; }
.tray { display: flex; align-items: center; margin-left: 0; }
.tr-chev { width: 28px; height: 18px; margin-left: 169px; }
.tr-cloud { width: 40px; height: 26px; margin-left: 46px; }
.tr-lang { width: 103px; margin-left: 47px; font-size: 28px; line-height: 40px; }
.tr-wifi { width: 40px; height: 30px; }
.tr-vol { width: 40px; height: 30px; margin-left: 20px; }
.tr-bat { width: 40px; height: 26px; margin-left: 20px; }
.tr-clock { width: 178px; font-size: 28.5px; line-height: 42px; text-align: right; margin-top: -2px; }
.tr-bell { width: 34px; height: 38px; margin-left: 22px; }
.copilot { position: relative; width: 58px; height: 66px; margin-left: 41px; }
.cop-ico { width: 58px; height: 54px; }
.cop-pre { position: absolute; left: 13px; bottom: 0; padding: 0 4px; background: #f6c544; border-radius: 5px; font-size: 19px; font-weight: 700; line-height: 24px; color: #222; }
```
